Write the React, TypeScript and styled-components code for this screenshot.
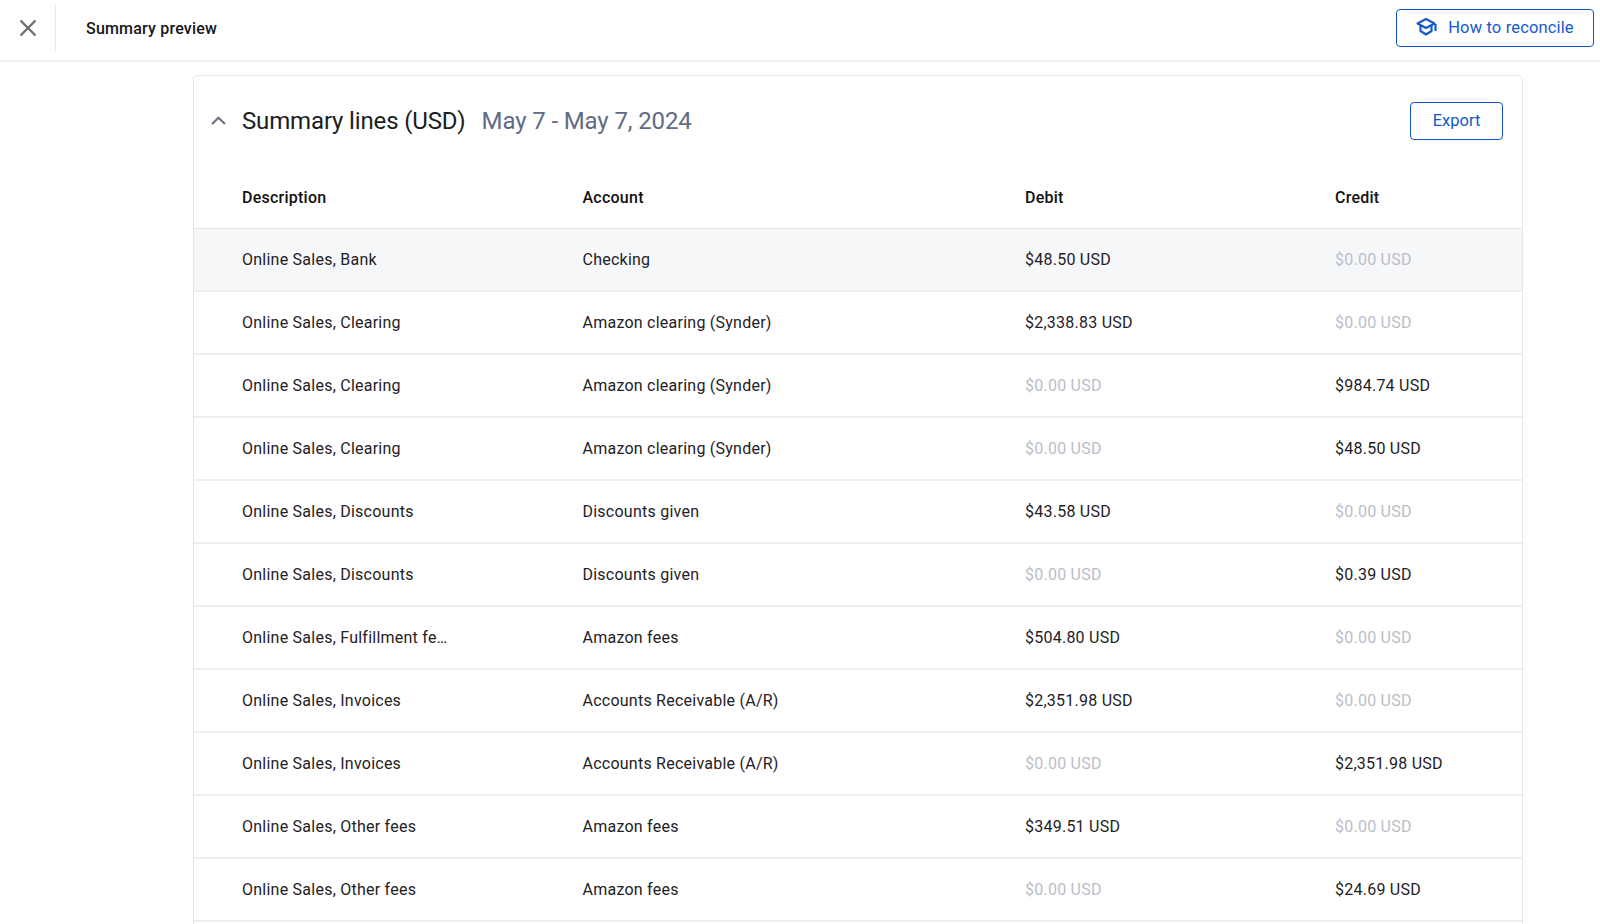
import React from "react";
import styled, { createGlobalStyle } from "styled-components";

type Line = {
  description: string;
  account: string;
  debit: string;
  credit: string;
};

const ZERO = "$0.00 USD";

const lines: Line[] = [
  { description: "Online Sales, Bank", account: "Checking", debit: "$48.50 USD", credit: ZERO },
  { description: "Online Sales, Clearing", account: "Amazon clearing (Synder)", debit: "$2,338.83 USD", credit: ZERO },
  { description: "Online Sales, Clearing", account: "Amazon clearing (Synder)", debit: ZERO, credit: "$984.74 USD" },
  { description: "Online Sales, Clearing", account: "Amazon clearing (Synder)", debit: ZERO, credit: "$48.50 USD" },
  { description: "Online Sales, Discounts", account: "Discounts given", debit: "$43.58 USD", credit: ZERO },
  { description: "Online Sales, Discounts", account: "Discounts given", debit: ZERO, credit: "$0.39 USD" },
  { description: "Online Sales, Fulfillment fe…", account: "Amazon fees", debit: "$504.80 USD", credit: ZERO },
  { description: "Online Sales, Invoices", account: "Accounts Receivable (A/R)", debit: "$2,351.98 USD", credit: ZERO },
  { description: "Online Sales, Invoices", account: "Accounts Receivable (A/R)", debit: ZERO, credit: "$2,351.98 USD" },
  { description: "Online Sales, Other fees", account: "Amazon fees", debit: "$349.51 USD", credit: ZERO },
  { description: "Online Sales, Other fees", account: "Amazon fees", debit: ZERO, credit: "$24.69 USD" },
];

const GlobalStyle = createGlobalStyle`
  html, body {
    margin: 0;
    height: 100%;
    overflow: hidden;
    background: #fff;
  }
  body {
    font-family: Roboto, "Liberation Sans", sans-serif;
    color: #1b1d21;
  }
`;

const Page = styled.div`
  height: 924px;
  overflow: hidden;
`;

const TopBar = styled.header`
  height: 60px;
  display: flex;
  align-items: center;
  border-bottom: 2px solid #eceef2;
  padding-right: 6px;
`;

const CloseSlot = styled.div`
  width: 55px;
  height: 46px;
  display: flex;
  align-items: center;
  justify-content: center;
  border-right: 1px solid #e6e8ec;
  margin-right: 30px;
  margin-top: -4px;
`;

const PageTitle = styled.div`
  flex: 1;
  font-size: 16px;
  font-weight: 500;
  letter-spacing: 0.2px;
  color: #15171a;
  margin-top: -3px;
`;

const OutlineButton = styled.button<{ $w: number; $lift?: boolean }>`
  width: ${(p) => p.$w}px;
  height: 38px;
  display: flex;
  align-items: center;
  justify-content: center;
  gap: 10px;
  background: #fff;
  border: 1px solid #1155cc;
  border-radius: 4px;
  color: #1558d0;
  font-family: inherit;
  font-size: 16.5px;
  letter-spacing: ${(p) => (p.$lift ? "0.15px" : "0")};
  padding: 0 0 1px;
  margin-top: ${(p) => (p.$lift ? "-5px" : "0")};
`;

const Content = styled.main`
  padding: 13px 77px 0 193px;
`;

const Card = styled.section`
  border: 1px solid #e3e6ec;
  border-radius: 5px 5px 0 0;
  padding-bottom: 40px;
`;

const CardHead = styled.div`
  height: 90px;
  display: flex;
  align-items: center;
  padding: 0 19px 0 17px;
`;

const Chevron = styled.svg`
  width: 15px;
  height: 9px;
  margin: -1px 16px 0 0;
`;

const CardTitle = styled.h2`
  margin: 0 16px 0 0;
  font-size: 24px;
  font-weight: 400;
  letter-spacing: -0.15px;
  color: #1b1d21;
`;

const DateRange = styled.span`
  flex: 1;
  font-size: 24px;
  letter-spacing: -0.12px;
  color: #5f6b85;
`;

const Row = styled.div<{ $head?: boolean; $hl?: boolean }>`
  display: grid;
  grid-template-columns: 340.5px 442.5px 310px 1fr;
  align-items: center;
  box-sizing: border-box;
  height: 63px;
  padding-left: 48px;
  border-bottom: ${(p) => (p.$head ? "1px solid #dfe2e7" : "2px solid #edeef1")};
  background: ${(p) => (p.$hl ? "#f6f7f9" : "#fff")};
  font-size: 16px;
  letter-spacing: 0.24px;
  font-weight: ${(p) => (p.$head ? 500 : 400)};
  color: ${(p) => (p.$head ? "#111" : "#1f2125")};
`;

const Amount = styled.span<{ $zero: boolean }>`
  color: ${(p) => (p.$zero ? "#b9bec9" : "#1f2125")};
`;

const CapIcon = () => (
  <svg width="22" height="20" viewBox="0 0 22 20" fill="none" stroke="#1558d0" strokeWidth="2.2" strokeLinejoin="round">
    <path d="M10 2 L18.5 6.5 L10 11 L1.5 6.5 Z" />
    <path d="M4.5 9 V14 L10 17.5 L15.5 14 V9" />
    <path d="M19.5 7 V14" />
  </svg>
);

const App = () => (
  <Page>
    <GlobalStyle />
    <TopBar>
      <CloseSlot>
        <svg width="20" height="20" viewBox="0 0 20 20" fill="none" stroke="#6d6f73" strokeWidth="2.4">
          <path d="M2.5 2.5 L17.5 17.5 M17.5 2.5 L2.5 17.5" />
        </svg>
      </CloseSlot>
      <PageTitle>Summary preview</PageTitle>
      <OutlineButton $w={198} $lift>
        <CapIcon />
        How to reconcile
      </OutlineButton>
    </TopBar>
    <Content>
      <Card>
        <CardHead>
          <Chevron viewBox="0 0 15 9" fill="none" stroke="#6d7480" strokeWidth="2.2">
            <path d="M1 8 L7.5 1.8 L14 8" />
          </Chevron>
          <CardTitle>Summary lines (USD)</CardTitle>
          <DateRange>May 7 - May 7, 2024</DateRange>
          <OutlineButton $w={93}>Export</OutlineButton>
        </CardHead>
        <Row $head>
          <span>Description</span>
          <span>Account</span>
          <span>Debit</span>
          <span>Credit</span>
        </Row>
        {lines.map((l, i) => (
          <Row key={i} $hl={i === 0}>
            <span>{l.description}</span>
            <span>{l.account}</span>
            <Amount $zero={l.debit === ZERO}>{l.debit}</Amount>
            <Amount $zero={l.credit === ZERO}>{l.credit}</Amount>
          </Row>
        ))}
      </Card>
    </Content>
  </Page>
);

export default App;
